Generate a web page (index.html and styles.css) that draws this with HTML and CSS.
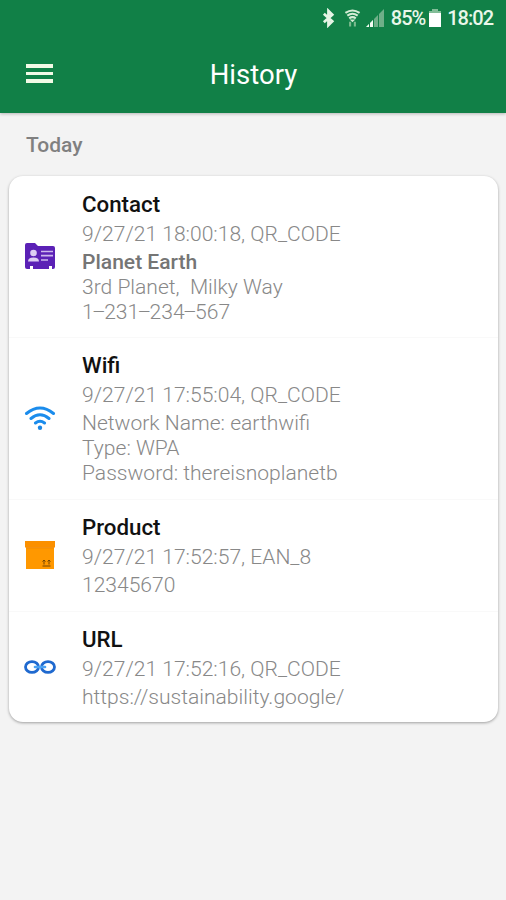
FILE: index.html
```
<!DOCTYPE html>
<html lang="en">
<head>
    <meta charset="UTF-8">
    <meta name="viewport" content="width=device-width, initial-scale=1.0">
    <title>History</title>
    <link rel="stylesheet" href="styles.css">
</head>
<body>
    <header class="app-header">
        <div class="status-bar">
            <svg class="status-bluetooth" width="13" height="20" viewBox="0 0 14 20" fill="none" stroke="#e6f5e6" stroke-width="3">
                <path d="M2 5.500l9 8L7 17.500V2.500l4 4-9 8"/>
            </svg>
            <svg class="status-wifi" width="17" height="20" viewBox="0 0 18 20" fill="none" stroke="#d5ecd5" stroke-width="2.200">
                <path d="M1.500 4.500q7.500-5 15 0M3.500 7.500q5.500-4 11 0M5.500 10.300q3.500-2.500 7 0"/>
                <path d="M6 11.500h6l-3 3z" fill="#d5ecd5" stroke="none"/>
                <path d="M6.500 14v5M11.500 14v5" stroke="#7dba8f"/>
            </svg>
            <svg class="status-signal" width="18" height="18" viewBox="0 0 18 18">
                <path d="M0 18L18 0v18z" fill="#6faf88"/>
                <path d="M0 18l3-3v3zM4 18v-4l3-3v7z" fill="#f2fbf2"/>
                <path d="M3.500 12v6M7.500 8v10M12.500 4v14" stroke="#118047"/>
            </svg>
            <span class="status-percent">85%</span>
            <svg class="status-battery" width="12" height="18" viewBox="0 0 12 18">
                <path d="M3 0h6v2h3v3H0V2h3z" fill="#83bd98"/>
                <path d="M0 4h12v14H0z" fill="#fff"/>
            </svg>
            <span class="status-time">18:02</span>
        </div>
        <div class="title-bar">
            <button class="menu-button" aria-label="Menu">
                <span></span>
                <span></span>
                <span></span>
            </button>
            <h1>History</h1>
        </div>
    </header>

    <main>
        <h2 class="day">Today</h2>
        <div class="card">
            <div class="item">
                <svg class="icon" width="32" height="28" viewBox="0 0 32 28">
                    <path d="M3 1h8l3 3h15q2 0 2 2v19q0 2-2 2h-1v-3h-3V27H9v-3H6V27H3q-2 0-2-2V3q0-2 2-2z" fill="#5b21b6"/>
                    <circle cx="9.500" cy="11" r="3.300" fill="#dccdf3"/>
                    <path d="M4 19.500q0-4 5.500-4t5.500 4z" fill="#dccdf3"/>
                    <path d="M17 9.500h12M17 13.700h12M17 18h7" stroke="#cdb8ed" stroke-width="1.700"/>
                </svg>
                <div class="text">
                    <h3>Contact</h3>
                    <p class="meta">9/27/21 18:00:18, QR_CODE</p>
                    <p class="name">Planet Earth</p>
                    <p class="address">3rd Planet,&nbsp; Milky Way</p>
                    <p class="phone">1<span class="dash">–</span>231<span class="dash">–</span>234<span class="dash">–</span>567</p>
                </div>
            </div>
            <div class="item">
                <svg class="icon" width="32" height="26" viewBox="0 0 32 26" fill="none" stroke="#1b8cec" stroke-width="3" stroke-linecap="round">
                    <path d="M2.500 8.500q13.500-11 27 0M7 13.500q9-7.500 18 0M11.500 18q4.500-3.500 9 0"/>
                    <circle cx="16" cy="22.800" r="2.200" fill="#1b86e3" stroke="none"/>
                </svg>
                <div class="text">
                    <h3>Wifi</h3>
                    <p class="meta">9/27/21 17:55:04, QR_CODE</p>
                    <p class="network">Network Name: earthwifi</p>
                    <p class="type">Type: WPA</p>
                    <p class="password">Password: thereisnoplanetb</p>
                </div>
            </div>
            <div class="item">
                <svg class="icon" width="32" height="30" viewBox="0 0 32 30">
                    <path d="M1 1h30v6.500H1z" fill="#fb9000"/>
                    <path d="M2 7.500h28V29H2z" fill="#ff9800"/>
                    <path d="M2 7.800h28" stroke="#ed8500"/>
                    <path d="M20 20v4.500M18.500 21.500l1.500-1.500 1.500 1.500M25 20v4.500M23.500 21.500l1.500-1.500 1.500 1.500M18.500 26h8" fill="none" stroke="#744500"/>
                </svg>
                <div class="text">
                    <h3>Product</h3>
                    <p class="meta">9/27/21 17:52:57, EAN_8</p>
                    <p class="barcode">12345670</p>
                </div>
            </div>
            <div class="item">
                <svg class="icon" width="32" height="16" viewBox="0 0 32 16" fill="none" stroke="#1f69cf" stroke-width="2.800">
                    <ellipse cx="8" cy="8" rx="6.500" ry="5.400"/>
                    <ellipse cx="24" cy="8" rx="6.500" ry="5.400"/>
                    <path d="M11 8h10" stroke="#4ca3f3" stroke-width="2.600" stroke-linecap="round"/>
                </svg>
                <div class="text">
                    <h3>URL</h3>
                    <p class="meta">9/27/21 17:52:16, QR_CODE</p>
                    <p class="link">https://sustainability.google/</p>
                </div>
            </div>
        </div>
    </main>
</body>
</html>
```
FILE: styles.css
```
body {
    font-family: Roboto, sans-serif;
    margin: 0;
    min-height: 100vh;
    background-color: #f3f3f3;
}
h1, h2, h3, p {
    margin: 0;
}
.app-header {
    height: 113px;
    background-color: #118047;
    color: #fff;
    box-shadow: 0 1px 3px rgba(0, 0, 0, 0.25);
}
.status-bar {
    display: flex;
    align-items: center;
    justify-content: flex-end;
    height: 36px;
    padding-right: 13px;
    font-size: 20px;
    font-weight: 500;
    letter-spacing: -1px;
    color: #e9f7e9;
}
.status-wifi {
    margin-left: 9px;
}
.status-signal {
    margin-left: 5px;
}
.status-percent {
    margin-left: 7px;
}
.status-battery {
    margin: 0 6px 0 4px;
}
.title-bar {
    display: grid;
    grid-template-columns: 54px 1fr 54px;
    align-items: center;
    height: 77px;
}
.menu-button {
    display: flex;
    flex-direction: column;
    gap: 4px;
    width: 27px;
    margin: -2px 0 0 26px;
    padding: 0;
    border: none;
    background: none;
}
.menu-button span {
    height: 3.5px;
    background-color: #f2fae6;
}
h1 {
    padding-left: 1px;
    font-size: 27.5px;
    font-weight: 400;
    text-align: center;
}
.day {
    padding: 19px 26px 18px;
    font-size: 21px;
    font-weight: 500;
    line-height: 26px;
    color: #808080;
}
.card {
    margin: 0 8px 0 9px;
    border-radius: 14px;
    background-color: #fff;
    box-shadow: 0 1px 3px rgba(0, 0, 0, 0.35);
}
.item {
    display: flex;
    align-items: center;
    box-sizing: border-box;
    padding: 15.5px 15px 13.4px;
    border-bottom: 1px solid #f9f9f9;
}
.item:last-child {
    padding-bottom: 12.5px;
    border-bottom: none;
}
.icon {
    flex: none;
    margin: 0 26px 3px 0;
}
.text {
    font-size: 21.05px;
    font-weight: 300;
    line-height: 25px;
    color: #888;
    white-space: nowrap;
}
h3 {
    font-size: 22.3px;
    font-weight: 500;
    color: #111;
}
.meta {
    margin: 4px 0 3px;
}
.name {
    font-weight: 500;
    color: #757575;
}
.dash {
    margin: 0 -1.65px;
}
```
